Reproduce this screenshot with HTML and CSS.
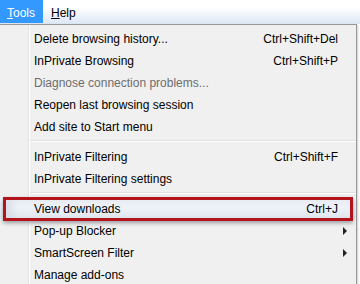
FILE: index.html
```html
<!DOCTYPE html>
<html>
<head>
    <title>Tools menu</title>
    <link rel="stylesheet" href="styles.css">
</head>
<body>
    <div class="menubar">
        <span class="mb-item active"><u>T</u>ools</span>
        <span class="mb-item"><u>H</u>elp</span>
    </div>

    <div class="menu">
        <div class="item"><span>Delete browsing history...</span><span class="key">Ctrl+Shift+Del</span></div>
        <div class="item"><span>InPrivate Browsing</span><span class="key">Ctrl+Shift+P</span></div>
        <div class="item disabled"><span>Diagnose connection problems...</span></div>
        <div class="item"><span>Reopen last browsing session</span></div>
        <div class="item"><span>Add site to Start menu</span></div>
        <div class="sep"></div>
        <div class="item"><span>InPrivate Filtering</span><span class="key">Ctrl+Shift+F</span></div>
        <div class="item"><span>InPrivate Filtering settings</span></div>
        <div class="sep"></div>
        <div class="item hl"><span>View downloads</span><span class="key">Ctrl+J</span></div>
        <div class="item"><span>Pop-up Blocker</span><span class="arrow"></span></div>
        <div class="item"><span>SmartScreen Filter</span><span class="arrow"></span></div>
        <div class="item"><span>Manage add-ons</span></div>
    </div>
</body>
</html>
```

FILE: styles.css
```css
body {
    margin: 0;
    background: #fff;
    font-family: "Liberation Sans", "Noto Sans", sans-serif;
    font-size: 12px;
    color: #000;
    overflow: hidden;
}
.menubar {
    height: 24px;
    display: flex;
    background: linear-gradient(to bottom, #ffffff 30%, #dce7f5);
}
.mb-item {
    height: 20px;
    line-height: 20px;
    padding: 3px 8px 0 7px;
}
.mb-item.active {
    background: #3399ff;
    color: #fff;
}
.mb-item + .mb-item {
    margin-left: 1px;
}
.menu {
    width: 356px;
    border-top: 1px solid #979797;
    border-right: 1px solid #979797;
    padding-top: 2px;
    background: linear-gradient(to right, #f0f0f0 28px, #e2e3e3 28px, #e2e3e3 29px, #fff 29px, #fff 30px, #f0f0f0 30px);
    box-shadow: 1px 1px 2px rgba(0, 0, 0, 0.2);
}
.item {
    position: relative;
    height: 22px;
    padding: 1px 18px 0 34px;
    box-sizing: border-box;
    display: flex;
    align-items: center;
    justify-content: space-between;
}
.disabled { color: #6d6d6d; }
.key { text-align: right; }
.arrow {
    width: 0;
    height: 0;
    border-left: 4px solid #222;
    border-top: 4px solid transparent;
    border-bottom: 4px solid transparent;
    margin-right: -9px;
}
.sep {
    height: 8px;
    margin-left: 30px;
    position: relative;
}
.sep::before {
    content: "";
    position: absolute;
    left: 0;
    right: 0;
    top: 3px;
    border-top: 1px solid #e0e0e0;
    border-bottom: 1px solid #fff;
}
.hl {
    background: linear-gradient(to bottom, #f3f6fb, #e6ecf5);
}
.hl::after {
    content: "";
    position: absolute;
    left: 3px;
    right: 3px;
    top: 0;
    bottom: -2px;
    border: 3px solid #b3141c;
    box-shadow: 0 2px 4px rgba(0, 0, 0, 0.35), inset 6px 0 8px rgba(0, 0, 0, 0.08);
}
```
